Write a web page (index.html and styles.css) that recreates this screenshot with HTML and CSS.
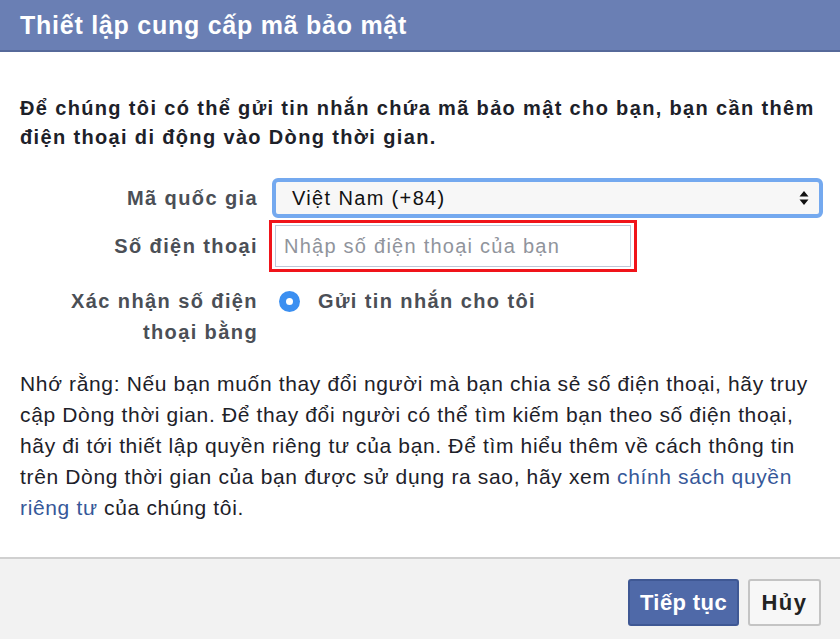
FILE: index.html
```html
<!DOCTYPE html>
<html lang="vi">
<head>
<meta charset="utf-8">
<title>Thiết lập cung cấp mã bảo mật</title>
<link rel="stylesheet" href="styles.css">
</head>
<body>
<div class="dialog">
  <div class="header">Thiết lập cung cấp mã bảo mật</div>
  <div class="content">
    <p class="intro">Để chúng tôi có thể gửi tin nhắn chứa mã bảo mật cho bạn, bạn cần thêm điện thoại di động vào Dòng thời gian.</p>
    <div class="form">
      <div class="label">Mã quốc gia</div>
      <div class="select">
        <span class="select-text">Việt Nam (+84)</span>
        <svg class="arrows" width="10" height="16" viewBox="0 0 10 16"><path d="M5 1 L9.5 6.5 H0.5 Z M5 15 L9.5 9.5 H0.5 Z" fill="#111"/></svg>
      </div>
      <div class="label">Số điện thoại</div>
      <div class="input-wrap"><div class="input">Nhập số điện thoại của bạn</div></div>
      <div class="label label-two">Xác nhận số điện thoại bằng</div>
      <div class="radio-row"><span class="radio"></span><span class="radio-text">Gửi tin nhắn cho tôi</span></div>
    </div>
    <p class="note">Nhớ rằng: Nếu bạn muốn thay đổi người mà bạn chia sẻ số điện thoại, hãy truy cập Dòng thời gian. Để thay đổi người có thể tìm kiếm bạn theo số điện thoại, hãy đi tới thiết lập quyền riêng tư của bạn. Để tìm hiểu thêm về cách thông tin trên Dòng thời gian của bạn được sử dụng ra sao, hãy xem <a class="link">chính sách quyền riêng tư</a> của chúng tôi.</p>
  </div>
  <div class="footer">
    <button class="btn btn-primary">Tiếp tục</button>
    <button class="btn btn-default">Hủy</button>
  </div>
</div>
</body>
</html>
```
FILE: styles.css
```css
* { box-sizing: border-box; }
html, body { margin: 0; padding: 0; }
body {
  width: 840px;
  height: 639px;
  overflow: hidden;
  background: #fff;
  font-family: "Liberation Sans", Arial, sans-serif;
  color: #1d2129;
}
.dialog {
  width: 840px;
  height: 639px;
  display: flex;
  flex-direction: column;
}
.header {
  height: 52px;
  background: #6a7fb4;
  border-bottom: 2px solid #56699a;
  color: #fff;
  font-weight: bold;
  font-size: 25px;
  letter-spacing: 0.75px;
  line-height: 51px;
  padding-left: 20px;
}
.content {
  flex: 1;
  padding: 42px 18px 0 20px;
}
.intro {
  margin: 0;
  font-weight: bold;
  font-size: 20px;
  letter-spacing: 1.35px;
  line-height: 29px;
  color: #1d2129;
}
.form {
  display: grid;
  grid-template-columns: 237px 1fr;
  column-gap: 12px;
  row-gap: 2px;
  margin-top: 26px;
  align-items: center;
}
.label {
  text-align: right;
  font-weight: bold;
  font-size: 20px;
  letter-spacing: 1.4px;
  line-height: 31px;
  color: #4b4f56;
  margin-right: -1px;
}
.label-two { align-self: start; padding-left: 40px; margin-top: 12px; }
.select {
  height: 40px;
  margin-left: 3px;
  width: 551px;
  border: 4px solid #74a9ef;
  border-radius: 6px;
  background: #f7f7f7;
  display: flex;
  align-items: center;
  justify-content: space-between;
  padding: 0 10px 0 16px;
  font-size: 20px;
  letter-spacing: 1.35px;
  color: #111;
}
.arrows { display: block; }
.input-wrap {
  width: 368px;
  height: 52px;
  border: 3px solid #f0141a;
  padding: 2px 3px;
}
.input {
  height: 100%;
  border: 1px solid #bdc7d8;
  background: #fff;
  font-size: 20px;
  letter-spacing: 1.25px;
  line-height: 40px;
  padding-left: 8px;
  color: #90949c;
}
.radio-row {
  display: flex;
  align-items: center;
  align-self: start;
  margin-top: 16px;
  padding-left: 10px;
}
.radio {
  width: 21px;
  height: 21px;
  border-radius: 50%;
  background: #3b8ff1;
  position: relative;
  flex: none;
}
.radio::after {
  content: "";
  position: absolute;
  left: 7px;
  top: 7px;
  width: 7px;
  height: 7px;
  border-radius: 50%;
  background: #fff;
}
.radio-text {
  margin-left: 18px;
  font-weight: bold;
  font-size: 20px;
  letter-spacing: 1.4px;
  color: #4b4f56;
}
.note {
  margin: 20px 0 0 0;
  font-size: 21px;
  line-height: 31px;
  letter-spacing: 0.65px;
  color: #1d2129;
}
.link { color: #365899; text-decoration: none; }
.footer {
  height: 82px;
  background: #f2f2f2;
  border-top: 2px solid #d0d0d0;
  display: flex;
  justify-content: flex-end;
  align-items: flex-start;
  padding: 20px 19px 0 0;
  gap: 9px;
}
.btn {
  height: 47px;
  font-family: "Liberation Sans", Arial, sans-serif;
  font-weight: bold;
  font-size: 22px;
  letter-spacing: 0.4px;
  border-radius: 3px;
  padding: 0;
}
.btn-primary {
  width: 111px;
  background: #4f69a8;
  border: 2px solid #3f5894;
  color: #fff;
}
.btn-default {
  width: 73px;
  background: #f7f7f7;
  border: 2px solid #c4c4c4;
  color: #222;
  letter-spacing: 1.5px;
}
```
